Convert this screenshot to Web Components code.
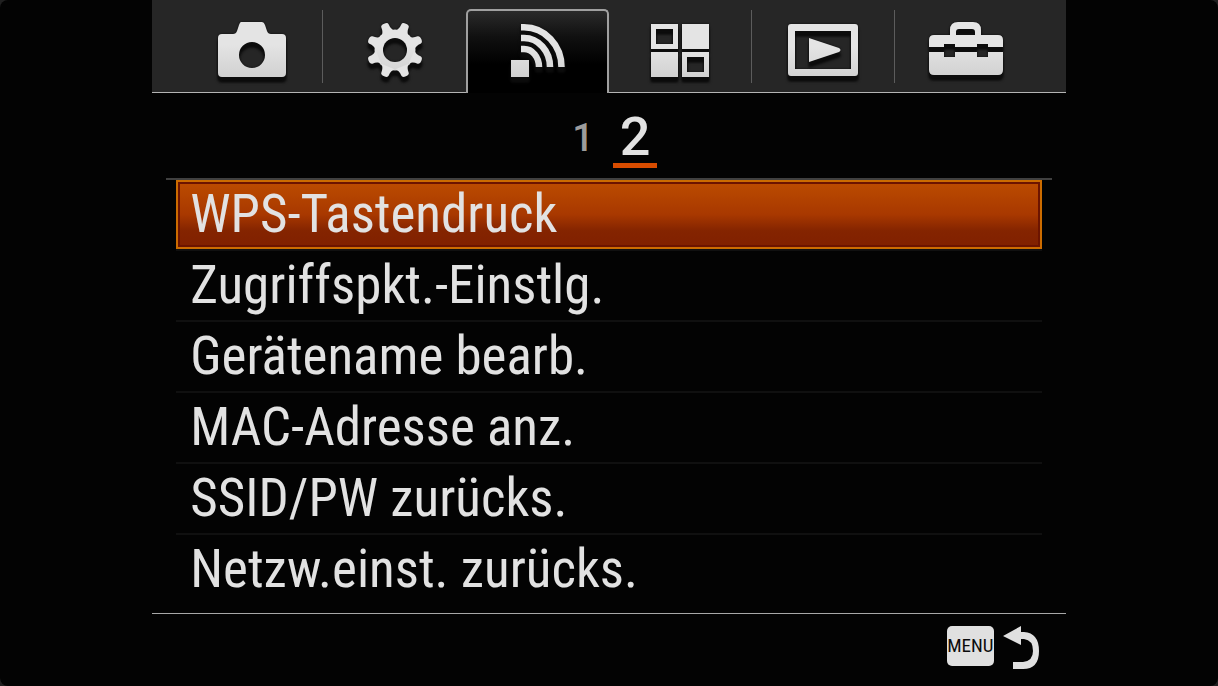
<!DOCTYPE html>
<html lang="de">
<head>
<meta charset="utf-8">
<title>Netzwerk</title>
<style>
  html, body { margin: 0; min-height: 100%; background: #202020; }
  body { font-family: "Roboto Condensed", Roboto, sans-serif; color: #e2e2e2; }
</style>
</head>
<body>
<camera-menu>
  <menu-tabs slot="tabs" active="2"></menu-tabs>
  <page-index slot="pages" count="2" current="2"></page-index>
  <menu-item selected>WPS-Tastendruck</menu-item>
  <menu-item>Zugriffspkt.-Einstlg.</menu-item>
  <menu-item>Gerätename bearb.</menu-item>
  <menu-item>MAC-Adresse anz.</menu-item>
  <menu-item>SSID/PW zurücks.</menu-item>
  <menu-item>Netzw.einst. zurücks.</menu-item>
  <menu-back slot="footer">MENU</menu-back>
</camera-menu>

<script>
const TEETH = [22.5, 67.5, 112.5, 157.5, 202.5, 247.5, 292.5, 337.5];

const ICONS = [
  { name: 'Kamera', w: 68, h: 56, body: `
    <path fill-rule="evenodd" d="M23 0H44Q46 0 47 3L49 9Q50 12 53 12H64Q68 12 68 16V51Q68 55 64 55H4Q0 55 0 51V16Q0 12 4 12H15Q18 12 19 9L21 3Q22 0 23 0ZM34 20A13 13 0 1 0 34 46A13 13 0 1 0 34 20Z"/>` },
  { name: 'Einstellungen', w: 56, h: 56, body: `
    <mask id="hub"><rect width="56" height="56" fill="#fff"/><circle cx="28" cy="28" r="12" fill="#000"/></mask>
    <g mask="url(#hub)"><circle cx="28" cy="28" r="20.500"/>
    ${TEETH.map(a => `<path transform="rotate(${a} 28 28)" d="M21 10Q24 7 24 2Q24 -0.500 28 -0.500Q32 -0.500 32 2Q32 7 35 10Z"/>`).join('')}</g>` },
  { name: 'Drahtlos', w: 54, h: 53, body: `
    <path d="M0 36H18V53H0Z"/>
    <g fill="none" stroke="url(#metal)" stroke-width="6.5">
      <path d="M10 25H13A15 18 0 0 1 28 43"/>
      <path d="M10 14H13A26 29 0 0 1 39 43"/>
      <path d="M10 3.300H13A37.500 39.700 0 0 1 50.500 43"/>
    </g>` },
  { name: 'Anwendungen', w: 58, h: 53, body: `
    <path fill-rule="evenodd" d="M0 0H27V25H0ZM5 5V20H22V5ZM31 0H58V25H31ZM0 28H27V53H0ZM31 28H58V53H31ZM36 33V48H53V33Z"/>` },
  { name: 'Wiedergabe', w: 70, h: 52, body: `
    <path fill-rule="evenodd" d="M3 0H67Q70 0 70 3V49Q70 52 67 52H3Q0 52 0 49V3Q0 0 3 0ZM7 7V45H63V7Z"/>
    <path d="M21 14L51 24Q54 26 51 28L21 38Z"/>` },
  { name: 'Setup', w: 74, h: 56, body: `
    <path fill-rule="evenodd" d="M5 13H21V8Q21 0 29 0H44Q52 0 52 8V13H69Q74 13 74 18V25H59V22H48V25H26V22H15V25H0V18Q0 13 5 13ZM27 13H46V10Q46 7 43 7H30Q27 7 27 10Z"/>
    <path d="M0 30H15V35H26V30H48V35H59V30H74V48Q74 53 69 53H5Q0 53 0 48Z"/>` }
];

class MenuTabs extends HTMLElement {
  connectedCallback() {
    const active = Number.parseInt(this.getAttribute('active')) || 0;
    const last = ICONS.length - 1;
    this.attachShadow({ mode: 'open' });
    this.shadowRoot.innerHTML = `
      <style>
        :host { display: block; background: #262626; }
        nav { display: grid; grid-template-columns: 28fr repeat(6, 143fr) 28fr; height: 93px; }
        .edge { border-bottom: 1px solid #b4b4b4; }
        button {
          min-width: 0; margin: 0; padding: 8px 0 0; border: 0;
          border-bottom: 1px solid #b4b4b4; background: none;
          display: flex; align-items: center; justify-content: center;
        }
        button.line {
          background: linear-gradient(#5c5c5c, #5c5c5c) right 10px / 1px 73px no-repeat;
        }
        button[aria-selected="true"] {
          margin-top: 9px; padding: 0 0 4px;
          border: 2px solid #a0a0a0; border-bottom: 0;
          border-radius: 5px 5px 0 0;
          background: linear-gradient(#2a2a2a, #101010 32%, #000 65%);
        }
        svg { overflow: visible; filter: drop-shadow(0 5px 1px #0c0c0c) drop-shadow(0 0 1px #0c0c0c); }
        svg.defs { position: absolute; }
      </style>
      <svg class="defs" width="0" height="0" aria-hidden="true">
        <linearGradient id="metal" gradientUnits="userSpaceOnUse" x1="0" y1="0" x2="0" y2="56">
          <stop offset=".4" stop-color="#e4e4e4"/><stop offset="1" stop-color="#d0d0d0"/>
        </linearGradient>
      </svg>
      <nav role="tablist">
        <span class="edge"></span>
        ${ICONS.map((icon, i) => `
          <button role="tab" aria-label="${icon.name}" aria-selected="${i === active}"
            class="${i !== active && i !== active - 1 && i < last ? 'line' : ''}">
            <svg width="${icon.w}" height="${icon.h}" fill="url(#metal)">${icon.body}</svg>
          </button>`).join('')}
        <span class="edge"></span>
      </nav>
    `;
  }
}
customElements.define('menu-tabs', MenuTabs);

class PageIndex extends HTMLElement {
  connectedCallback() {
    const count = Number.parseInt(this.getAttribute('count')) || 1;
    const current = Number.parseInt(this.getAttribute('current')) || 1;
    let links = '';
    for (let i = 1; i <= count; i++) {
      links += `<a href="#${i}"${i === current ? ' aria-current="page"' : ''}>${i}</a>`;
    }
    this.attachShadow({ mode: 'open' });
    this.shadowRoot.innerHTML = `
      <style>
        :host { display: block; }
        nav { display: flex; justify-content: center; align-items: flex-end; gap: 8px; padding: 18px 0 10px; }
        a {
          width: 44px; padding-bottom: 8px; text-align: center;
          color: #9c9c9c; text-decoration: none;
          font: 500 38px/44px Roboto, sans-serif;
        }
        a[aria-current] {
          color: #e2e2e2; font-size: 54px; line-height: 52px; padding: 0;
          border-bottom: 5px solid #d84c00;
        }
      </style>
      <nav aria-label="Seite">${links}</nav>
    `;
  }
}
customElements.define('page-index', PageIndex);

class MenuItem extends HTMLElement {
  constructor() {
    super();
    this.attachShadow({ mode: 'open' });
    this.shadowRoot.innerHTML = `
      <style>
        :host { display: block; border-bottom: 2px solid #101010; }
        :host(:last-of-type) { border-color: transparent; }
        button {
          display: block; width: 100%; height: 69px; box-sizing: border-box;
          margin: 0; padding: 0 12px; border: 2px solid transparent;
          background: none; color: inherit; text-align: left; white-space: nowrap;
          font: 53px/65px "Roboto Condensed", Roboto, sans-serif;
        }
        :host([selected]) button {
          border-color: #cc6c00;
          background: linear-gradient(#bc4c00, #a83800 50%, #842400 75%, #802000);
          box-shadow: inset 0 0 0 2px #6c1400;
        }
      </style>
      <button><slot></slot></button>
    `;
  }
}
customElements.define('menu-item', MenuItem);

class MenuBack extends HTMLElement {
  constructor() {
    super();
    this.attachShadow({ mode: 'open' });
    this.shadowRoot.innerHTML = `
      <style>
        :host { display: block; }
        button {
          display: flex; align-items: flex-start; gap: 9px;
          margin: 0; padding: 0; border: 0; background: none;
        }
        .key {
          width: 47px; border-radius: 5px; background: #e0e0e0; color: #0c0c0c;
          text-align: center;
          font: 19px/40px "Roboto Condensed", Roboto, sans-serif;
        }
      </style>
      <button>
        <span class="key"><slot></slot></span>
        <svg width="37" height="44" fill="#e0e0e0" aria-hidden="true">
          <path d="M0 10L18 0V6H21Q36 7 36 25Q36 43 20 43H10V36H20Q30 35 30 25Q30 14 21 13H18V19Z"/>
        </svg>
      </button>
    `;
  }
}
customElements.define('menu-back', MenuBack);

class CameraMenu extends HTMLElement {
  constructor() {
    super();
    this.attachShadow({ mode: 'open' });
    this.shadowRoot.innerHTML = `
      <style>
        :host {
          display: flex; flex-direction: column; align-items: center;
          min-height: 100vh; background: #030303; border-radius: 8px;
        }
        .panel { width: 75%; }
        main { padding: 0 24px; }
        .rule { margin: 0 14px; height: 2px; background: #404040; }
        footer {
          display: flex; justify-content: flex-end; padding: 12px 26px 0;
          margin-top: 7px; border-top: 1px solid #a8a8a8;
        }
      </style>
      <div class="panel">
        <slot name="tabs"></slot>
        <slot name="pages"></slot>
        <div class="rule"></div>
        <main><slot></slot></main>
        <footer><slot name="footer"></slot></footer>
      </div>
    `;
  }
}
customElements.define('camera-menu', CameraMenu);
</script>
</body>
</html>
